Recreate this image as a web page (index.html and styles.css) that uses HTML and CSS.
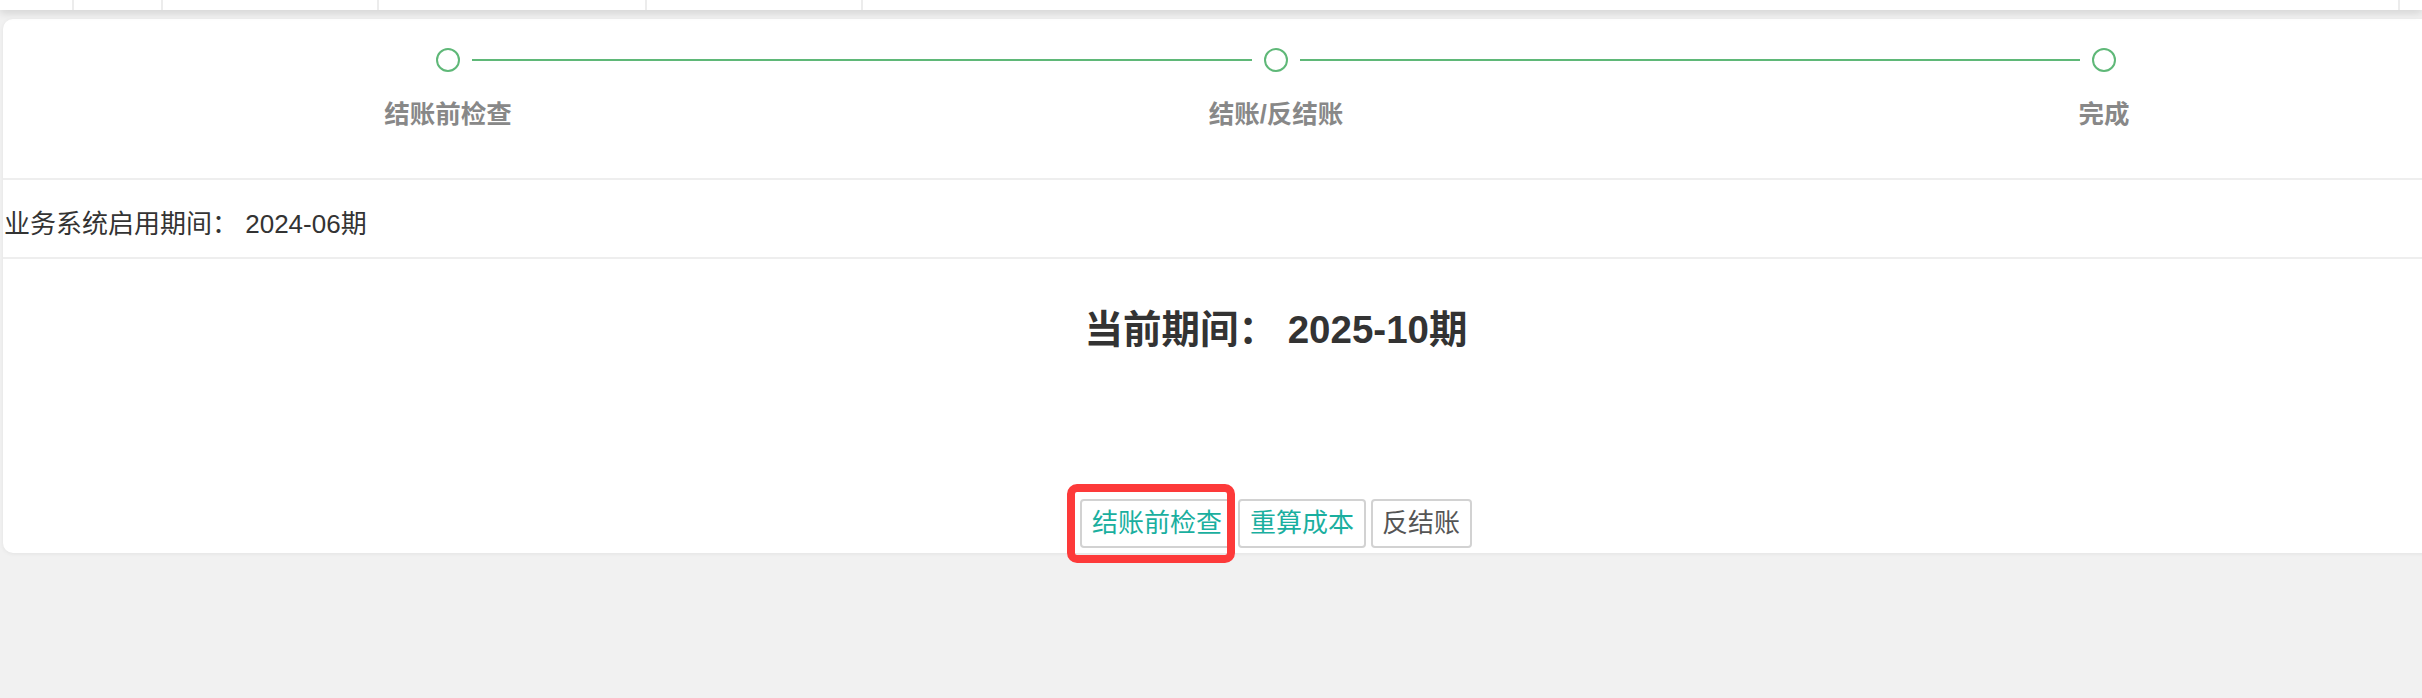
FILE: index.html
```html
<!DOCTYPE html>
<html lang="zh-CN">
<head>
<meta charset="utf-8">
<title>结账</title>
<link rel="stylesheet" href="styles.css">
</head>
<body>
<div class="topbar">
  <div class="tcell c1"></div>
  <div class="tcell c2"></div>
  <div class="tcell c3"></div>
  <div class="tcell c4"></div>
  <div class="tcell c5"></div>
  <div class="tcell c6"></div>
  <div class="tcell c7"></div>
</div>
<div class="card">
  <div class="steps">
    <div class="step first">
      <div class="step-head"><span class="seg"></span><span class="dot"></span><span class="seg"></span></div>
      <div class="step-label">结账前检查</div>
    </div>
    <div class="step">
      <div class="step-head"><span class="seg"></span><span class="dot"></span><span class="seg"></span></div>
      <div class="step-label">结账/反结账</div>
    </div>
    <div class="step last">
      <div class="step-head"><span class="seg"></span><span class="dot"></span><span class="seg"></span></div>
      <div class="step-label">完成</div>
    </div>
  </div>
  <div class="info">业务系统启用期间： 2024-06期</div>
  <div class="main">
    <h2 class="period">当前期间： 2025-10期</h2>
    <div class="actions">
      <span class="btn-wrap"><button class="btn teal">结账前检查</button><span class="highlight"></span></span>
      <button class="btn teal">重算成本</button>
      <button class="btn">反结账</button>
    </div>
  </div>
</div>
</body>
</html>
```
FILE: styles.css
```css
html, body {
  margin: 0;
  padding: 0;
}
body {
  background: #f1f1f1;
  font-family: "Liberation Sans", "Noto Sans CJK SC", sans-serif;
  color: #333;
  overflow: hidden;
  width: 2422px;
  height: 698px;
}
.topbar {
  display: flex;
  height: 10px;
  background: #fff;
  box-shadow: 0 3px 8px rgba(0, 0, 0, 0.13);
  position: relative;
  z-index: 1;
}
.tcell {
  height: 10px;
  border-right: 2px solid #ececec;
  box-sizing: border-box;
}
.c1 { width: 74px; }
.c2 { width: 89px; }
.c3 { width: 216px; }
.c4 { width: 268px; }
.c5 { width: 216px; }
.c6 { width: 1537px; }
.c7 { flex: 1; border-right: none; }

.card {
  margin: 9px 0 0 3px;
  width: 2546px;
  background: #fff;
  border-radius: 10px;
  box-shadow: 0 1px 4px rgba(0, 0, 0, 0.06);
}
.steps {
  display: grid;
  grid-template-columns: repeat(3, 828px);
  padding: 29px 31px 0;
  height: 161px;
  box-sizing: border-box;
  border-bottom: 2px solid #eee;
}
.step {
  display: flex;
  flex-direction: column;
  align-items: stretch;
}
.step-head {
  display: flex;
  align-items: center;
  height: 24px;
}
.seg {
  flex: 1;
  height: 2px;
  background: #5fb878;
}
.step-head .seg:first-child { margin-right: 12px; }
.step-head .seg:last-child { margin-left: 12px; }
.first .seg:first-child,
.last .seg:last-child {
  visibility: hidden;
}
.dot {
  width: 24px;
  height: 24px;
  box-sizing: border-box;
  border: 2px solid #5fb878;
  border-radius: 50%;
  background: #fff;
}
.step-label {
  margin-top: 27px;
  line-height: 30px;
  text-align: center;
  font-size: 25.5px;
  font-weight: bold;
  color: #888;
}
.info {
  height: 79px;
  box-sizing: border-box;
  padding: 6px 0 0 1px;
  display: flex;
  align-items: center;
  font-size: 26px;
  color: #333;
  border-bottom: 2px solid #eee;
}
.main {
  display: flex;
  flex-direction: column;
  align-items: center;
  padding-bottom: 5px;
}
.period {
  margin: 46px 0 0;
  font-size: 38.5px;
  line-height: 50px;
  font-weight: bold;
  color: #333;
}
.actions {
  display: flex;
  gap: 5px;
  margin-top: 144px;
}
.btn-wrap {
  position: relative;
  display: flex;
}
.btn {
  height: 49px;
  padding: 0 9.5px;
  border: 2px solid #d2d2d2;
  border-radius: 4px;
  background: #fff;
  font-family: "Liberation Sans", "Noto Sans CJK SC", sans-serif;
  font-size: 26px;
  color: #555;
  line-height: 45px;
  cursor: pointer;
}
.btn.teal {
  color: #1aaf9f;
}
.highlight {
  position: absolute;
  left: -13px;
  right: -2px;
  top: -15px;
  bottom: -15px;
  border: 8px solid #fd3a3a;
  border-radius: 10px;
  pointer-events: none;
}
```
